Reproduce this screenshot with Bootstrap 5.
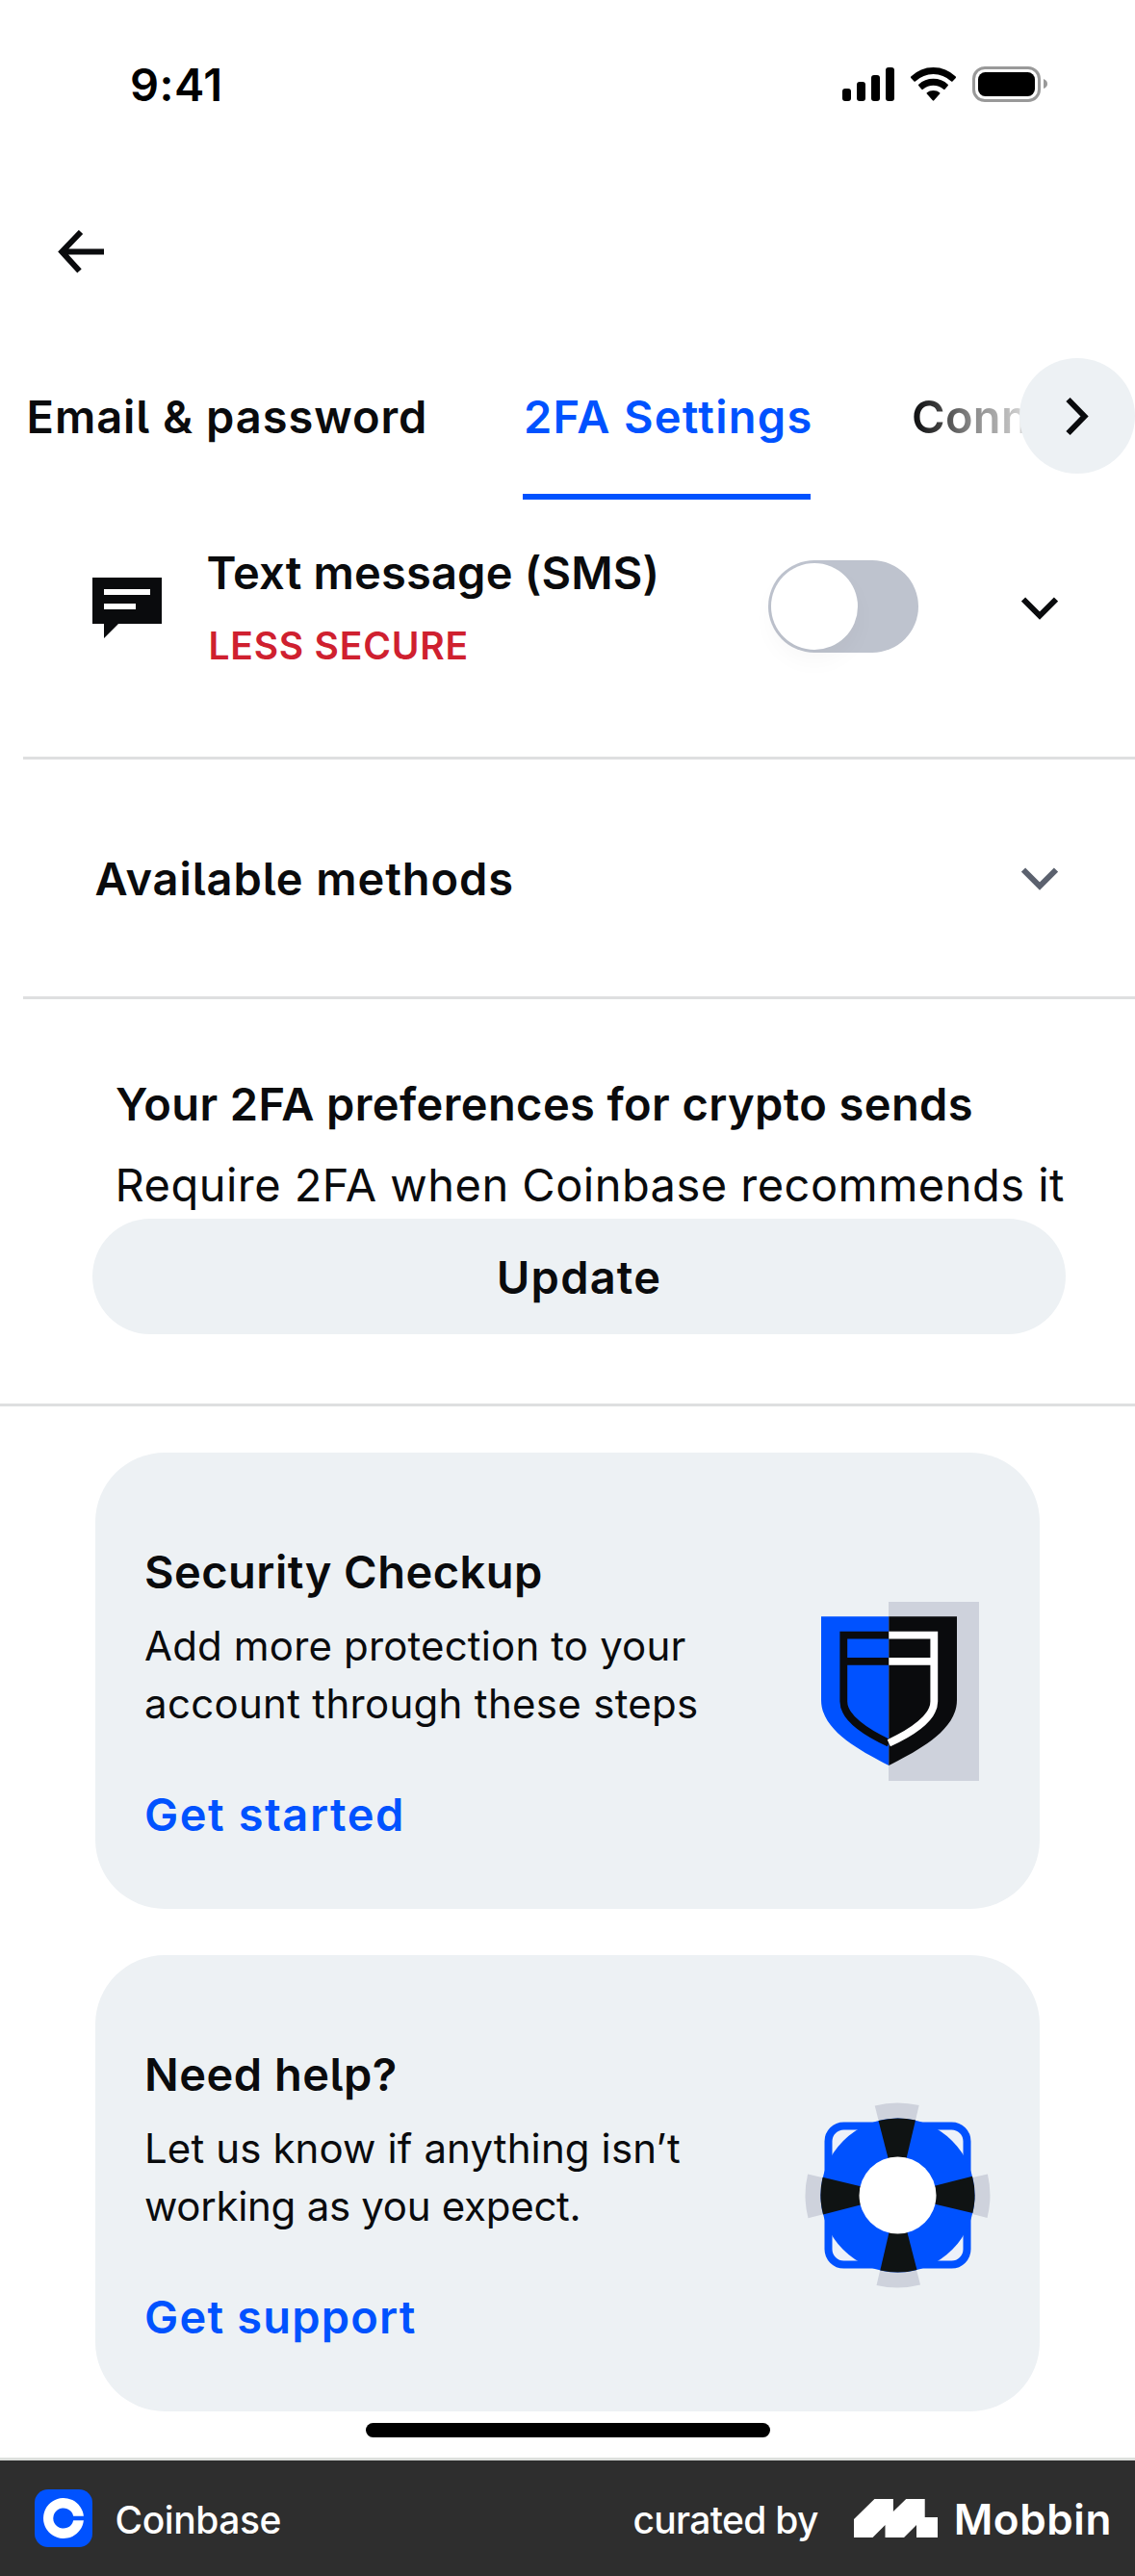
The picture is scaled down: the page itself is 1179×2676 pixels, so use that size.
<!DOCTYPE html>
<html lang="en">
<head>
<meta charset="utf-8">
<meta name="viewport" content="width=device-width, initial-scale=1">
<title>2FA Settings</title>
<link href="https://cdn.jsdelivr.net/npm/bootstrap@5.3.0/dist/css/bootstrap.min.css" rel="stylesheet">
<style>
  :root { --ink:#0a0b0d; --brand:#0052ff; --surface:#edf1f4; --rule:#dedfe0; }
  body { font-family:Inter, "Liberation Sans", sans-serif; color:var(--ink); background:#fff; font-size:47px; font-kerning:normal; overflow-x:hidden; }
  svg { display:block; flex:none; }
  .screen { width:1179px; height:2676px; overflow:hidden; }
  .headline { font-size:47px; font-weight:600; line-height:72px; margin:0; white-space:nowrap; font-feature-settings:"cv05"; }
  .statusbar { height:175px; padding-left:135px; padding-right:91px; }
  .statusbar .clock { color:#000; letter-spacing:.5px; }
  .backbar { height:172px; padding-left:60px; }
  .tabstrip { height:172px; padding-left:27.5px; overflow:hidden; }
  .tabstrip .tab-item { height:172px; line-height:172px; color:var(--ink); text-decoration:none; }
  .tab-email { letter-spacing:.95px; width:515.5px; }
  .tabstrip .tab-2fa { color:var(--brand); letter-spacing:1.3px; width:299px; box-shadow:inset 0 -6px var(--brand); padding-left:1px; }
  .tabstrip .tab-conn { margin-left:105px; letter-spacing:.3px; background:linear-gradient(90deg,#0a0b0d 0,#444 32px,#888 62px,#b4b4b4 95px,#dcdcdc 120px,#fff 150px); -webkit-background-clip:text; background-clip:text; color:transparent; }
  .tab-next { top:25px; right:0; width:120px; height:120px; border-radius:50%; background:var(--surface); border:0; padding:0; }
  .method { padding:38.5px 80px 0 96px; height:267px; }
  .method .copy { margin-left:46.5px; width:583.5px; }
  .method .headline { line-height:75px; letter-spacing:.18px; margin-top:-1px; margin-bottom:1px; }
  .caution { color:#cf202f; font-size:39px; font-weight:600; line-height:76px; letter-spacing:.78px; margin:0; padding-left:2px; }
  .toggle { width:156px; height:96px; border-radius:48px; background:#bec3ce; padding:3px; margin-top:24.5px; }
  .toggle .knob { width:90px; height:90px; border-radius:50%; background:#fff; box-shadow:0 12px 24px rgba(0,0,0,.03); }
  .inset-rule { border-bottom:3px solid var(--rule); margin-left:24px; }
  .available { height:246px; padding:2px 80px 0 98.5px; }
  .available .headline { letter-spacing:.92px; }
  .prefs { height:423px; padding:67px 72px 0 96px; border-bottom:3px solid var(--rule); }
  .prefs .headline { line-height:84px; letter-spacing:.4px; padding-left:24px; }
  .prefs .detail { line-height:70px; margin:7px 0 0; letter-spacing:.47px; padding-left:23.5px; white-space:nowrap; }
  .btn-soft { width:1011px; height:120px; border-radius:60px; background:var(--surface); color:var(--ink); border:0; padding:0; font-size:47px; font-weight:600; line-height:122px; letter-spacing:1.2px; display:block; }
  .promo { margin:48px 99px 0; height:474px; border:0; border-radius:72px; background:var(--surface); color:var(--ink); padding:88px 51px 0 51px; }
  .promo .body-copy { font-size:42px; line-height:60px; margin:11px 0 49px; white-space:nowrap; }
  .promo a { color:var(--brand); text-decoration:none; display:block; }
  .art-shield { margin:67px 12px 0 0; }
  .art-ring { margin:65px 0 0; }
  .home-indicator { width:420px; height:15px; border-radius:8px; background:#000; margin:12px auto 21px; }
  .credit { height:123px; border-top:3px solid #dcdfdc; background:#2e2e2e; color:#fff; padding:0 26px 0 36px; }
  .credit span { line-height:60px; white-space:nowrap; }
  .credit .app-name { font-size:39px; font-weight:500; letter-spacing:-.44px; margin-left:23.5px; padding-top:4px; }
  .credit .by-line { font-size:39px; font-weight:500; letter-spacing:-.69px; padding-top:4px; margin-right:37.5px; }
  .credit .brand-name { font-size:44px; font-weight:600; letter-spacing:.6px; margin-left:16.5px; padding-top:2px; margin-right:-2px; }
  .ls-a { letter-spacing:.45px; } .ls-b { letter-spacing:.16px; } .ls-c { letter-spacing:.3px; }
  .ls-d { letter-spacing:1.55px; } .ls-e { letter-spacing:.5px; } .ls-f { letter-spacing:.12px; }
  .ls-g { letter-spacing:-.28px; } .ls-h { letter-spacing:1.2px; }
</style>
<script src="https://cdn.jsdelivr.net/npm/bootstrap@5.3.0/dist/js/bootstrap.bundle.min.js"></script>
</head>
<body>
<div class="screen d-flex flex-column">
  <header>
    <div class="statusbar d-flex align-items-center justify-content-between">
      <div class="headline clock">9:41</div>
      <svg width="213" height="37" viewBox="875 69 213 37">
        <g fill="#000">
          <rect x="875" y="92" width="9" height="13" rx="3"/><rect x="890" y="85" width="9" height="20" rx="3"/>
          <rect x="905" y="78" width="9" height="27" rx="3"/><rect x="920" y="70" width="9" height="35" rx="3"/>
          <path d="M946.2 79.6Q956 70 969.5 70T992.800 79.600q.5.700 0 1.300L989.500 84.500q-.7.600-1.400 0Q980 77 969.500 77T950.900 84.500q-.7.600-1.400 0L946.200 80.900q-.5-.600 0-1.300z"/>
          <path d="M954.200 87.700Q960.700 81.800 969.500 81.800T984.700 87.700q.6.700 0 1.300L981.500 92.700q-.7.600-1.400 0Q975.500 88.700 969.500 88.700T958.800 92.700q-.7.600-1.400 0L954.200 89q-.5-.600 0-1.300z"/>
          <path d="M962.800 96.300Q965.500 94 969.500 94T976.200 96.300q.6.600 0 1.300L970.200 104.300q-.7.700-1.400 0L962.800 97.600q-.6-.700 0-1.300z"/>
          <rect x="1016" y="75" width="59" height="25" rx="7.500"/>
        </g>
        <rect x="1011.500" y="70.500" width="68" height="34" rx="11.500" fill="none" stroke="#999" stroke-width="3"/>
        <path d="M1084 82q4 1.500 4 5t-4 5z" fill="#999"/>
      </svg>
    </div>
    <div class="backbar d-flex align-items-center">
      <svg width="48" height="45" viewBox="0 0 48 45" fill="none" stroke="#0a0b0d" stroke-width="6"><path d="M48 22.500H5M24 2 4.300 22.500 22.500 42.500"/></svg>
    </div>
    <nav class="position-relative">
      <div class="tabstrip d-flex">
        <a class="headline tab-item tab-email" href="#">Email &amp; password</a>
        <a class="headline tab-item tab-2fa" href="#">2FA Settings</a>
        <a class="headline tab-item tab-conn" href="#">Conn</a>
      </div>
      <button class="tab-next position-absolute" aria-label="Next tabs">
        <svg width="120" height="120" viewBox="0 0 120 120" fill="none" stroke="#0a0b0d" stroke-width="6"><path d="M50.500 43 67.500 60.500 50.500 78"/></svg>
      </button>
    </nav>
  </header>

  <section class="method d-flex align-items-start">
    <svg width="72" height="145" viewBox="96 558 72 145"><path fill="#0a0b0d" d="M96 600h72v48h-45l-15 15v-15H96z"/><path fill="#fff" d="M108 612h48v6h-48zM108 627h33v6h-33z"/></svg>
    <div class="copy flex-shrink-0">
      <h2 class="headline">Text message (SMS)</h2>
      <p class="caution">LESS SECURE</p>
    </div>
    <div class="toggle flex-shrink-0" role="switch" aria-checked="false"><div class="knob"></div></div>
    <svg class="ms-auto" width="38" height="145" viewBox="1061 558 38 145" fill="none" stroke="#0a0b0d" stroke-width="6"><path d="M1063 622.500 1080 639.500 1097 622.500"/></svg>
  </section>
  <div class="inset-rule"></div>
  <section class="available d-flex align-items-center justify-content-between">
    <h2 class="headline">Available methods</h2>
    <svg width="38" height="24" viewBox="0 0 38 24" fill="none" stroke="#5b616e" stroke-width="6"><path d="M2 2.500 19 19.500 36 2.500"/></svg>
  </section>
  <div class="inset-rule"></div>

  <section class="prefs">
    <h2 class="headline">Your 2FA preferences for crypto sends</h2>
    <p class="detail">Require 2FA when Coinbase recommends it</p>
    <button class="btn btn-soft">Update</button>
  </section>

  <article class="promo card flex-row justify-content-between flex-shrink-0">
    <div>
      <h2 class="headline ls-a">Security Checkup</h2>
      <p class="body-copy"><span class="ls-b">Add more protection to your</span><br><span class="ls-c">account through these steps</span></p>
      <a class="headline ls-d" href="#">Get started</a>
    </div>
    <svg class="art-shield" width="164" height="186" viewBox="853 1664 164 186">
      <path fill="#ced2dc" d="M923 1664h94v186h-94z"/>
      <path fill="#0052ff" d="M853 1679.300h70.300V1834C897 1820 853 1799 853 1766z"/>
      <path fill="#0a0b0d" d="M923.300 1679.300H994V1766C994 1799 950 1820 923.300 1834z"/>
      <g fill="none" stroke-width="7.800">
        <path stroke="#0a0b0d" d="M923.300 1698.600H876.300V1767.500C876.300 1784 899 1799.500 923.300 1810.700M876.300 1725.800h47"/>
        <path stroke="#fff" d="M923.300 1698.600H970.300V1767.500C970.300 1784 948 1799.500 923.300 1810.700M923.300 1725.800h47"/>
      </g>
    </svg>
  </article>

  <article class="promo card flex-row justify-content-between flex-shrink-0">
    <div>
      <h2 class="headline ls-e">Need help?</h2>
      <p class="body-copy"><span class="ls-f">Let us know if anything isn’t</span><br><span class="ls-g">working as you expect.</span></p>
      <a class="headline ls-h" href="#">Get support</a>
    </div>
    <svg class="art-ring" width="193" height="193" viewBox="-96.500 -96.500 193 193">
      <g fill="#ced2dc">
        <path d="M0 0-23.800-93A96 96 0 0 1 22.200-93.400Z"/><path d="M0 0-22-93.400A96 96 0 0 1 23.500-93Z" transform="rotate(90)"/>
        <path d="M0 0-23.500-93A96 96 0 0 1 22-93.400Z" transform="rotate(180)"/><path d="M0 0-23.800-93A96 96 0 0 1 22-93.400Z" transform="rotate(270)"/>
      </g>
      <rect x="-72" y="-72" width="144" height="144" rx="16" fill="#edf1f9" stroke="#0052ff" stroke-width="8"/>
      <circle r="80" fill="#0052ff"/>
      <g fill="#0f1313">
        <path d="M0 0 -20-77.500A80 80 0 0 1 18.500-77.900Z"/><path d="M0 0-19.800-77.500A80 80 0 0 1 18.500-77.900Z" transform="rotate(90)"/>
        <path d="M0 0-20-77.500A80 80 0 0 1 18.200-77.900Z" transform="rotate(180)"/><path d="M0 0-20-77.500A80 80 0 0 1 18.800-77.900Z" transform="rotate(270)"/>
      </g>
      <circle r="40" fill="#fff"/>
    </svg>
  </article>

  <div class="home-indicator flex-shrink-0"></div>

  <footer class="credit d-flex align-items-center flex-shrink-0">
    <svg width="60" height="60" viewBox="0 0 60 60"><rect width="60" height="60" rx="14" fill="#0052ff"/><path fill="#fff" d="M50.900 27.700A21 21 0 1 0 50.900 32.300H40.200A10.600 10.600 0 1 1 40.200 27.700Z"/></svg>
    <span class="app-name">Coinbase</span>
    <span class="by-line ms-auto">curated by</span>
    <svg width="87" height="40" viewBox="0 0 87 40"><path fill="#fff" d="M0 21 21.400 0H40.900V13L54.200 0H73.700V19H87V40H65V27L52 40H32.500V27L19.500 40H0z"/></svg>
    <span class="brand-name">Mobbin</span>
  </footer>
</div>
</body>
</html>
